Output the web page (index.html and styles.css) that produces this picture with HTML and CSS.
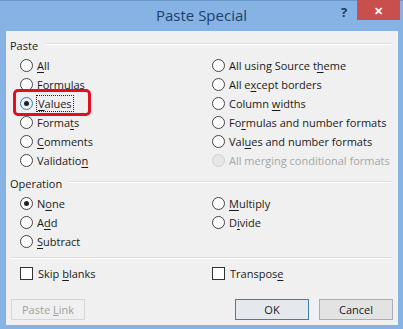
FILE: index.html
```html
<!DOCTYPE html>
<html>
<head>
  <title>Paste Special</title>
  <link rel="stylesheet" href="styles.css">
</head>
<body>
  <div class="window">
    <div class="titlebar">
      <span class="title">Paste Special</span>
      <span class="help">?</span>
      <span class="close">&#x2715;</span>
    </div>
    <div class="client">
      <div class="group-head"><span>Paste</span><i></i></div>
      <div class="grid">
        <label class="opt"><b class="radio"></b><span><u>A</u>ll</span></label>
        <label class="opt"><b class="radio"></b><span>All using Source t<u>h</u>eme</span></label>
        <label class="opt"><b class="radio"></b><span><u>F</u>ormulas</span></label>
        <label class="opt"><b class="radio"></b><span>All e<u>x</u>cept borders</span></label>
        <label class="opt"><b class="radio on focus"></b><span class="focused"><u>V</u>alues</span></label>
        <label class="opt"><b class="radio"></b><span>Column <u>w</u>idths</span></label>
        <label class="opt"><b class="radio"></b><span>Forma<u>t</u>s</span></label>
        <label class="opt"><b class="radio"></b><span>Fo<u>r</u>mulas and number formats</span></label>
        <label class="opt"><b class="radio"></b><span><u>C</u>omments</span></label>
        <label class="opt"><b class="radio"></b><span>Val<u>u</u>es and number formats</span></label>
        <label class="opt"><b class="radio"></b><span>Validatio<u>n</u></span></label>
        <label class="opt disabled"><b class="radio"></b><span>All merging conditional formats</span></label>
      </div>
      <div class="group-head op"><span>Operation</span><i></i></div>
      <div class="grid">
        <label class="opt"><b class="radio on"></b><span>N<u>o</u>ne</span></label>
        <label class="opt"><b class="radio"></b><span><u>M</u>ultiply</span></label>
        <label class="opt"><b class="radio"></b><span>A<u>d</u>d</span></label>
        <label class="opt"><b class="radio"></b><span>D<u>i</u>vide</span></label>
        <label class="opt"><b class="radio"></b><span><u>S</u>ubtract</span></label>
      </div>
      <div class="sep"></div>
      <div class="grid">
        <label class="opt"><b class="check"></b><span>Skip <u>b</u>lanks</span></label>
        <label class="opt"><b class="check"></b><span>Transpos<u>e</u></span></label>
      </div>
      <div class="buttons">
        <button class="btn" disabled>Paste <u>L</u>ink</button>
        <span class="spacer"></span>
        <button class="btn default">OK</button>
        <button class="btn">Cancel</button>
      </div>
      <div class="highlight"></div>
    </div>
  </div>
</body>
</html>
```

FILE: styles.css
```css
body {
  margin: 0;
  font-family: "Open Sans", "Noto Sans", sans-serif;
  font-size: 11px;
  color: #1a1a1a;
}

.window {
  width: 403px;
  height: 329px;
  background: #86b3e3;
  border-top: 1px solid #6a99cc;
  box-sizing: border-box;
  display: flex;
  flex-direction: column;
}

.titlebar {
  height: 30px;
  position: relative;
  display: flex;
  align-items: center;
  justify-content: center;
}

.title {
  font-size: 15px;
  color: #20406c;
  margin-top: -2px;
}

.help {
  position: absolute;
  left: 341px;
  top: 2px;
  font-weight: bold;
  font-size: 13px;
  color: #1f3a5c;
}

.close {
  position: absolute;
  left: 357px;
  top: -1px;
  width: 43px;
  height: 20px;
  background: #c94f4f;
  color: #fff;
  font-size: 11px;
  font-weight: bold;
  display: flex;
  align-items: center;
  justify-content: center;
}

.client {
  position: relative;
  margin: 0 5px 0 6px;
  flex: 1;
  background: #f0f0f0;
  padding-top: 7px;
  border-bottom: 4px solid #86b3e3;
}

.group-head {
  display: flex;
  align-items: center;
  height: 14px;
  padding: 0 6px 0 4px;
}

.group-head i {
  flex: 1;
  height: 0;
  border-top: 1px solid #d5dfe5;
  border-bottom: 1px solid #fff;
  margin-left: 7px;
  margin-top: -2px;
}

.group-head.op {
  margin-top: 6px;
}

.grid {
  display: grid;
  grid-template-columns: 192px 192px;
  padding-left: 14px;
  margin-top: 4px;
}

.opt {
  height: 19px;
  display: flex;
  align-items: center;
  white-space: nowrap;
}

.opt u {
  text-decoration-thickness: 1px;
  text-underline-offset: 2px;
}

.radio {
  width: 11px;
  height: 11px;
  border: 1px solid #444;
  border-radius: 50%;
  background: #fff;
  margin-right: 4px;
  position: relative;
  flex: none;
}

.radio.on::after {
  content: "";
  position: absolute;
  left: 3px;
  top: 3px;
  width: 5px;
  height: 5px;
  border-radius: 50%;
  background: #222;
}

.radio.focus {
  border-color: #3c7fb1;
  background: #e5f1fb;
}

.check {
  width: 11px;
  height: 11px;
  border: 1px solid #333;
  background: #fff;
  margin-right: 5px;
  flex: none;
}

.focused {
  outline: 1px dotted #222;
  padding: 0 1px;
  line-height: 15px;
}

.disabled {
  color: #a6a6a6;
}

.disabled .radio {
  border-color: #cfcfcf;
  background: #e6e6e6;
}

.sep {
  margin: 6px 6px 5px 4px;
  border-top: 1px solid #d5dfe5;
  border-bottom: 1px solid #fff;
}

.buttons {
  display: flex;
  padding: 16px 5px 0 5px;
  gap: 10px;
}

.spacer {
  flex: 1;
}

.btn {
  width: 74px;
  height: 21px;
  font-family: inherit;
  font-size: 11px;
  color: #1a1a1a;
  background: #e3e3e3;
  border: 1px solid #adadad;
  padding: 0;
}

.btn.default {
  border-color: #3c7fb1;
  background: #e5e9ee;
}

.btn:disabled {
  color: #a0a0a0;
  background: #f0f0f0;
  border-color: #d6d6d6;
}

.highlight {
  position: absolute;
  left: 7px;
  top: 58px;
  width: 72px;
  height: 21px;
  border: 3px solid #e01020;
  border-radius: 5px;
}
```
